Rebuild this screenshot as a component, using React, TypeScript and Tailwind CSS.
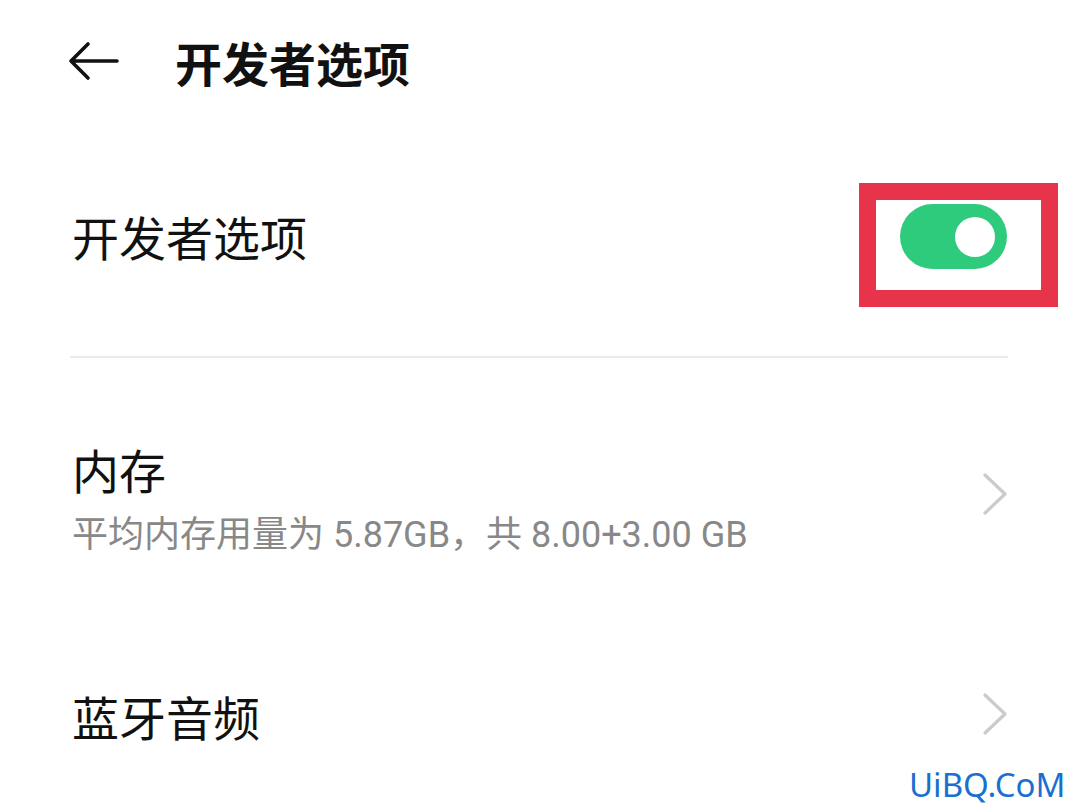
import React from "react";

const font = { fontFamily: '"Roboto", "Noto Sans CJK SC", sans-serif' };
const cjk = { fontFamily: '"Noto Sans CJK SC", sans-serif' };

function Chevron({ className = "" }: { className?: string }) {
  return (
    <svg width="26" height="44" viewBox="0 0 26 44" className={"shrink-0 " + className}>
      <path d="M3 3 L23 22 L3 41" fill="none" stroke="#cbcbcb" strokeWidth="3.2" strokeLinecap="round" strokeLinejoin="round" />
    </svg>
  );
}

export default function App() {
  return (
    <div className="w-[1080px] h-[810px] bg-white relative overflow-hidden text-[#111]" style={font}>
      {/* header */}
      <div className="h-[134px] flex items-center pl-[68px] pb-[12px]">
        <svg width="52" height="40" viewBox="0 0 52 40" className="shrink-0">
          <path d="M49 20 H4 M20 3 L3 20 L20 37" fill="none" stroke="#111" strokeWidth="3.6" strokeLinecap="round" strokeLinejoin="round" />
        </svg>
        <div className="ml-[55px] text-[47px] leading-none font-bold" style={cjk}>开发者选项</div>
      </div>

      {/* developer toggle row */}
      <div className="h-[222px] flex items-center justify-between pl-[72px] pr-[22px]">
        <div className="text-[47px] leading-none -mt-[20px]" style={cjk}>开发者选项</div>
        <div className="w-[199px] h-[124px] border-[17px] border-[#e8344a] pt-[4px] pl-[24px]">
          <div className="w-[107px] h-[65px] rounded-full bg-[#2ecb7d] flex items-center justify-end pr-[12px]">
            <div className="w-[40px] h-[40px] rounded-full bg-white" />
          </div>
        </div>
      </div>

      <div className="ml-[70px] w-[938px] h-[2px] bg-[#ebebeb]" />

      {/* memory row */}
      <div className="h-[250px] flex items-start justify-between pl-[72px] pr-[72px]">
        <div className="flex flex-col pt-[87px]">
          <div className="text-[47px] leading-none" style={cjk}>内存</div>
          <div className="mt-[25px] text-[36px] leading-none text-[#888888]">平均内存用量为 5.87GB，共 8.00+3.00 GB</div>
        </div>
        <Chevron className="mt-[114px]" />
      </div>

      {/* bluetooth audio row */}
      <div className="flex items-start justify-between pl-[72px] pr-[72px] pt-[84px]">
        <div className="text-[47px] leading-none" style={cjk}>蓝牙音频</div>
        <Chevron />
      </div>

      {/* watermark */}
      <div className="absolute left-[909px] top-[768px] text-[33px] leading-none text-[#1a6fd1]" style={{ fontFamily: '"Noto Sans", sans-serif' }}>UiBQ.CoM</div>
    </div>
  );
}
